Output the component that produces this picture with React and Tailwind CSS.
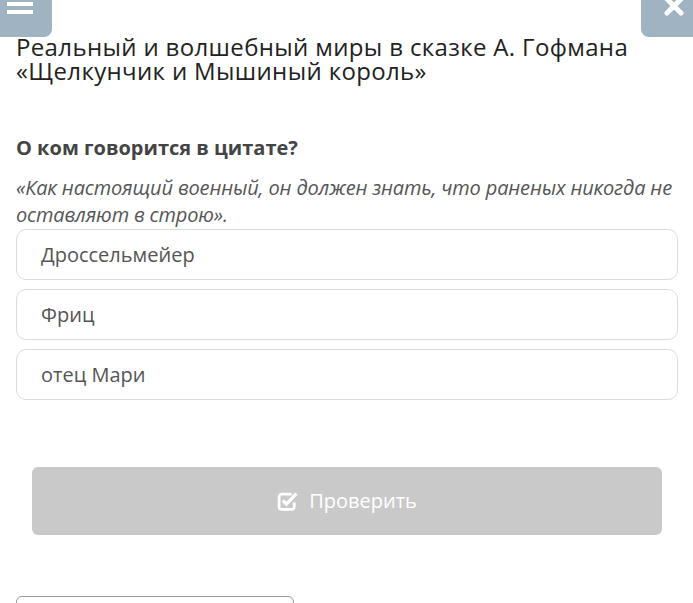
const options = ["Дроссельмейер", "Фриц", "отец Мари"];

// check-square-o, как в старом Font Awesome
function CheckSquareIcon() {
  return (
    <svg width="22" height="20" viewBox="0 0 21 19" fill="none">
      <path
        d="M14 3 H4.5 A2.5 2.5 0 0 0 2 5.5 V15 A2.5 2.5 0 0 0 4.5 17.5 H14 A2.5 2.5 0 0 0 16.5 15 V11"
        stroke="white"
        strokeWidth="2.6"
      />
      <path d="M5.5 9 L9 12.5 L18.5 2.5" stroke="white" strokeWidth="3.2" strokeLinejoin="miter" />
    </svg>
  );
}

export default function App() {
  return (
    <div className="relative w-[693px] h-[603px] overflow-hidden bg-white font-['Open_Sans',sans-serif]">
      {/* top corner buttons */}
      <button className="absolute left-0 top-0 w-[52px] h-[37px] rounded-br-[8px] bg-[#9fb3c3] overflow-hidden">
        <span className="absolute left-[7px] top-[-6px] flex flex-col gap-[4px]">
          <span className="block w-[26px] h-[4px] bg-white" />
          <span className="block w-[26px] h-[4px] bg-white" />
          <span className="block w-[26px] h-[4px] bg-white" />
        </span>
      </button>
      <button className="absolute right-0 top-0 w-[52px] h-[37px] rounded-bl-[8px] bg-[#9fb3c3]">
        <svg className="absolute left-[23px] top-[-4px]" width="20" height="20" viewBox="0 0 20 20">
          <path d="M3 3 L17 17 M17 3 L3 17" stroke="white" strokeWidth="5" strokeLinecap="round" />
        </svg>
      </button>

      <div className="px-4 pt-[35px]">
        <h1 className="text-[24px] leading-[24px] text-[#222] tracking-[0.35px]">
          Реальный и волшебный миры в сказке А. Гофмана
          <br />
          «Щелкунчик и Мышиный король»
        </h1>

        <h2 className="mt-[52px] text-[20px] leading-[26px] font-bold text-[#444]">
          О ком говорится в цитате?
        </h2>
        <p className="mt-[13px] text-[20px] leading-[27px] italic text-[#555] tracking-[-0.15px]">
          «Как настоящий военный, он должен знать, что раненых никогда не
          оставляют в строю».
        </p>

        <div className="mt-[1px] flex flex-col gap-[9px] w-[662px]">
          {options.map((o) => (
            <div
              key={o}
              className="h-[51px] rounded-[10px] border border-[#dcdcdc] flex items-center pl-6 text-[20px] text-[#555]"
            >
              {o}
            </div>
          ))}
        </div>

        <div className="mt-[67px] px-4">
          <button className="w-[630px] h-[68px] rounded-[6px] bg-[#c9c9c9] flex items-center justify-center gap-[10px] text-white text-[20px]">
            <CheckSquareIcon />
            Проверить
          </button>
        </div>

        <div className="mt-[61px] w-[278px] h-[30px] rounded-t-[6px] border border-[#999]" />
      </div>
    </div>
  );
}
